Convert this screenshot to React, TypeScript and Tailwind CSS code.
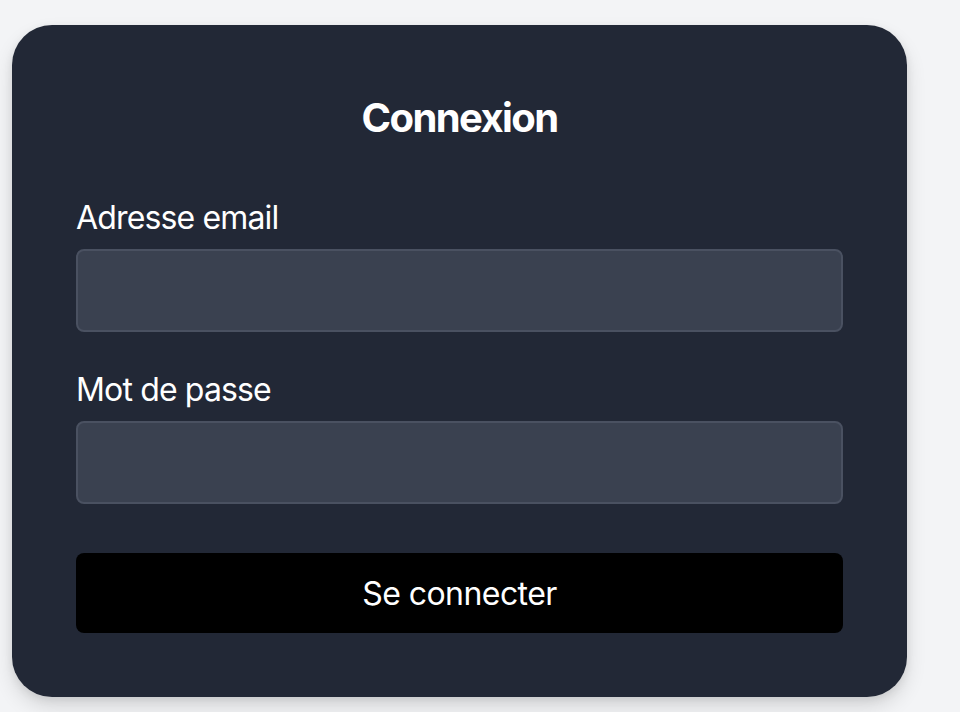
import React from "react";

export default function App() {
  return (
    <div
      className="min-h-[712px] w-full bg-[#f3f4f6] pl-[12px] pt-[25px]"
      style={{ fontFamily: "Inter, 'Noto Sans', sans-serif" }}
    >
      <div className="w-[895px] h-[672px] rounded-[40px] bg-[#222836] shadow-[0_10px_20px_rgba(0,0,0,0.12),0_3px_8px_rgba(0,0,0,0.08)] px-[64px] pt-[69px] pb-[64px] flex flex-col">
        <h1 className="text-center text-white font-bold text-[40px] leading-[48px] tracking-[-1.6px]">
          Connexion
        </h1>
        <div className="mt-[52px] flex flex-col">
          <label className="text-white text-[32px] leading-[48px] tracking-[-0.85px]">
            Adresse email
          </label>
          <input
            type="email"
            className="mt-[7px] h-[83px] w-full rounded-[8px] border-2 border-[#4a5161] bg-[#3a4150] outline-none"
          />
        </div>
        <div className="mt-[34px] flex flex-col">
          <label className="text-white text-[32px] leading-[48px] tracking-[-0.85px]">
            Mot de passe
          </label>
          <input
            type="password"
            className="mt-[7px] h-[83px] w-full rounded-[8px] border-2 border-[#4a5161] bg-[#3a4150] outline-none"
          />
        </div>
        <button className="mt-[49px] h-[80px] w-full rounded-[8px] bg-black pt-[2px] text-white text-[32px] leading-[48px] tracking-[-0.55px]">
          Se connecter
        </button>
      </div>
    </div>
  );
}
